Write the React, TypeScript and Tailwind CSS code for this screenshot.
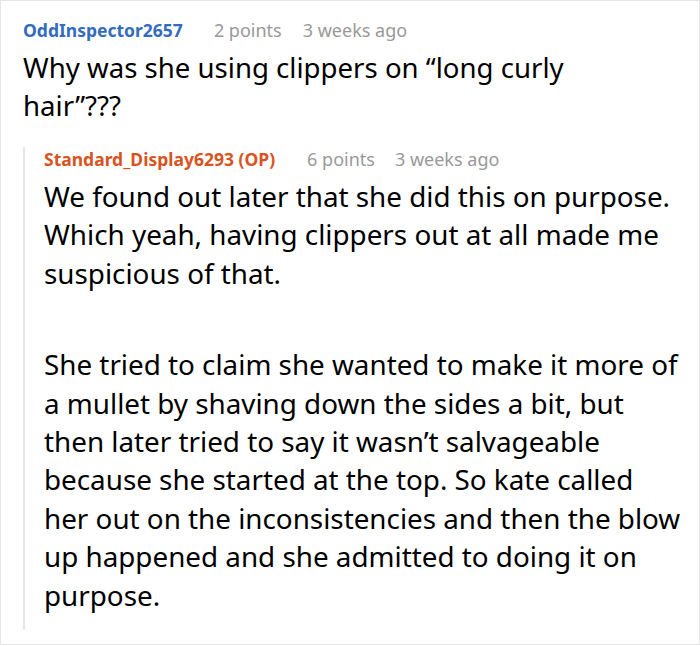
import React from "react";

export default function App() {
  const font = { fontFamily: '"Noto Sans", "Open Sans", sans-serif' };
  return (
    <div className="w-[700px] h-[646px] bg-white" style={font}>
      <div className="w-[700px] h-[645px] border border-[#e6e6e6] pl-[22px] pt-[17px]">
        <div className="flex items-center text-[18px] leading-[24px]">
          <span className="font-bold text-[17.5px] text-[#336bbf] mr-[31px]">OddInspector2657</span>
          <span className="text-[#999999] mr-[21px]">2 points</span>
          <span className="text-[#999999]">3 weeks ago</span>
        </div>
        <p className="mt-[6px] text-[27.6px] leading-[38px] text-black w-[620px]">
          Why was she using clippers on “long curly hair”???
        </p>
        <div className="mt-[23px] border-l-2 border-[#e6e6e6] pl-[19px] pt-[2px] h-[483px]">
          <div className="flex items-center text-[18px] leading-[24px] -mt-[2px]">
            <span className="font-bold text-[17.5px] text-[#d9531e] mr-[32px]">Standard_Display6293 (OP)</span>
            <span className="text-[#999999] mr-[20px]">6 points</span>
            <span className="text-[#999999]">3 weeks ago</span>
          </div>
          <p className="mt-[6px] text-[27.8px] leading-[38.4px] text-black w-[638px]">
            We found out later that she did this on purpose. Which yeah, having clippers out at all made me suspicious of that.
          </p>
          <p className="mt-[53px] text-[27.8px] leading-[38.4px] text-black w-[638px]">
            She tried to claim she wanted to make it more of a mullet by shaving down the sides a bit, but then later tried to say it wasn’t salvageable because she started at the top. So kate called her out on the inconsistencies and then the blow up happened and she admitted to doing it on purpose.
          </p>
        </div>
      </div>
    </div>
  );
}
